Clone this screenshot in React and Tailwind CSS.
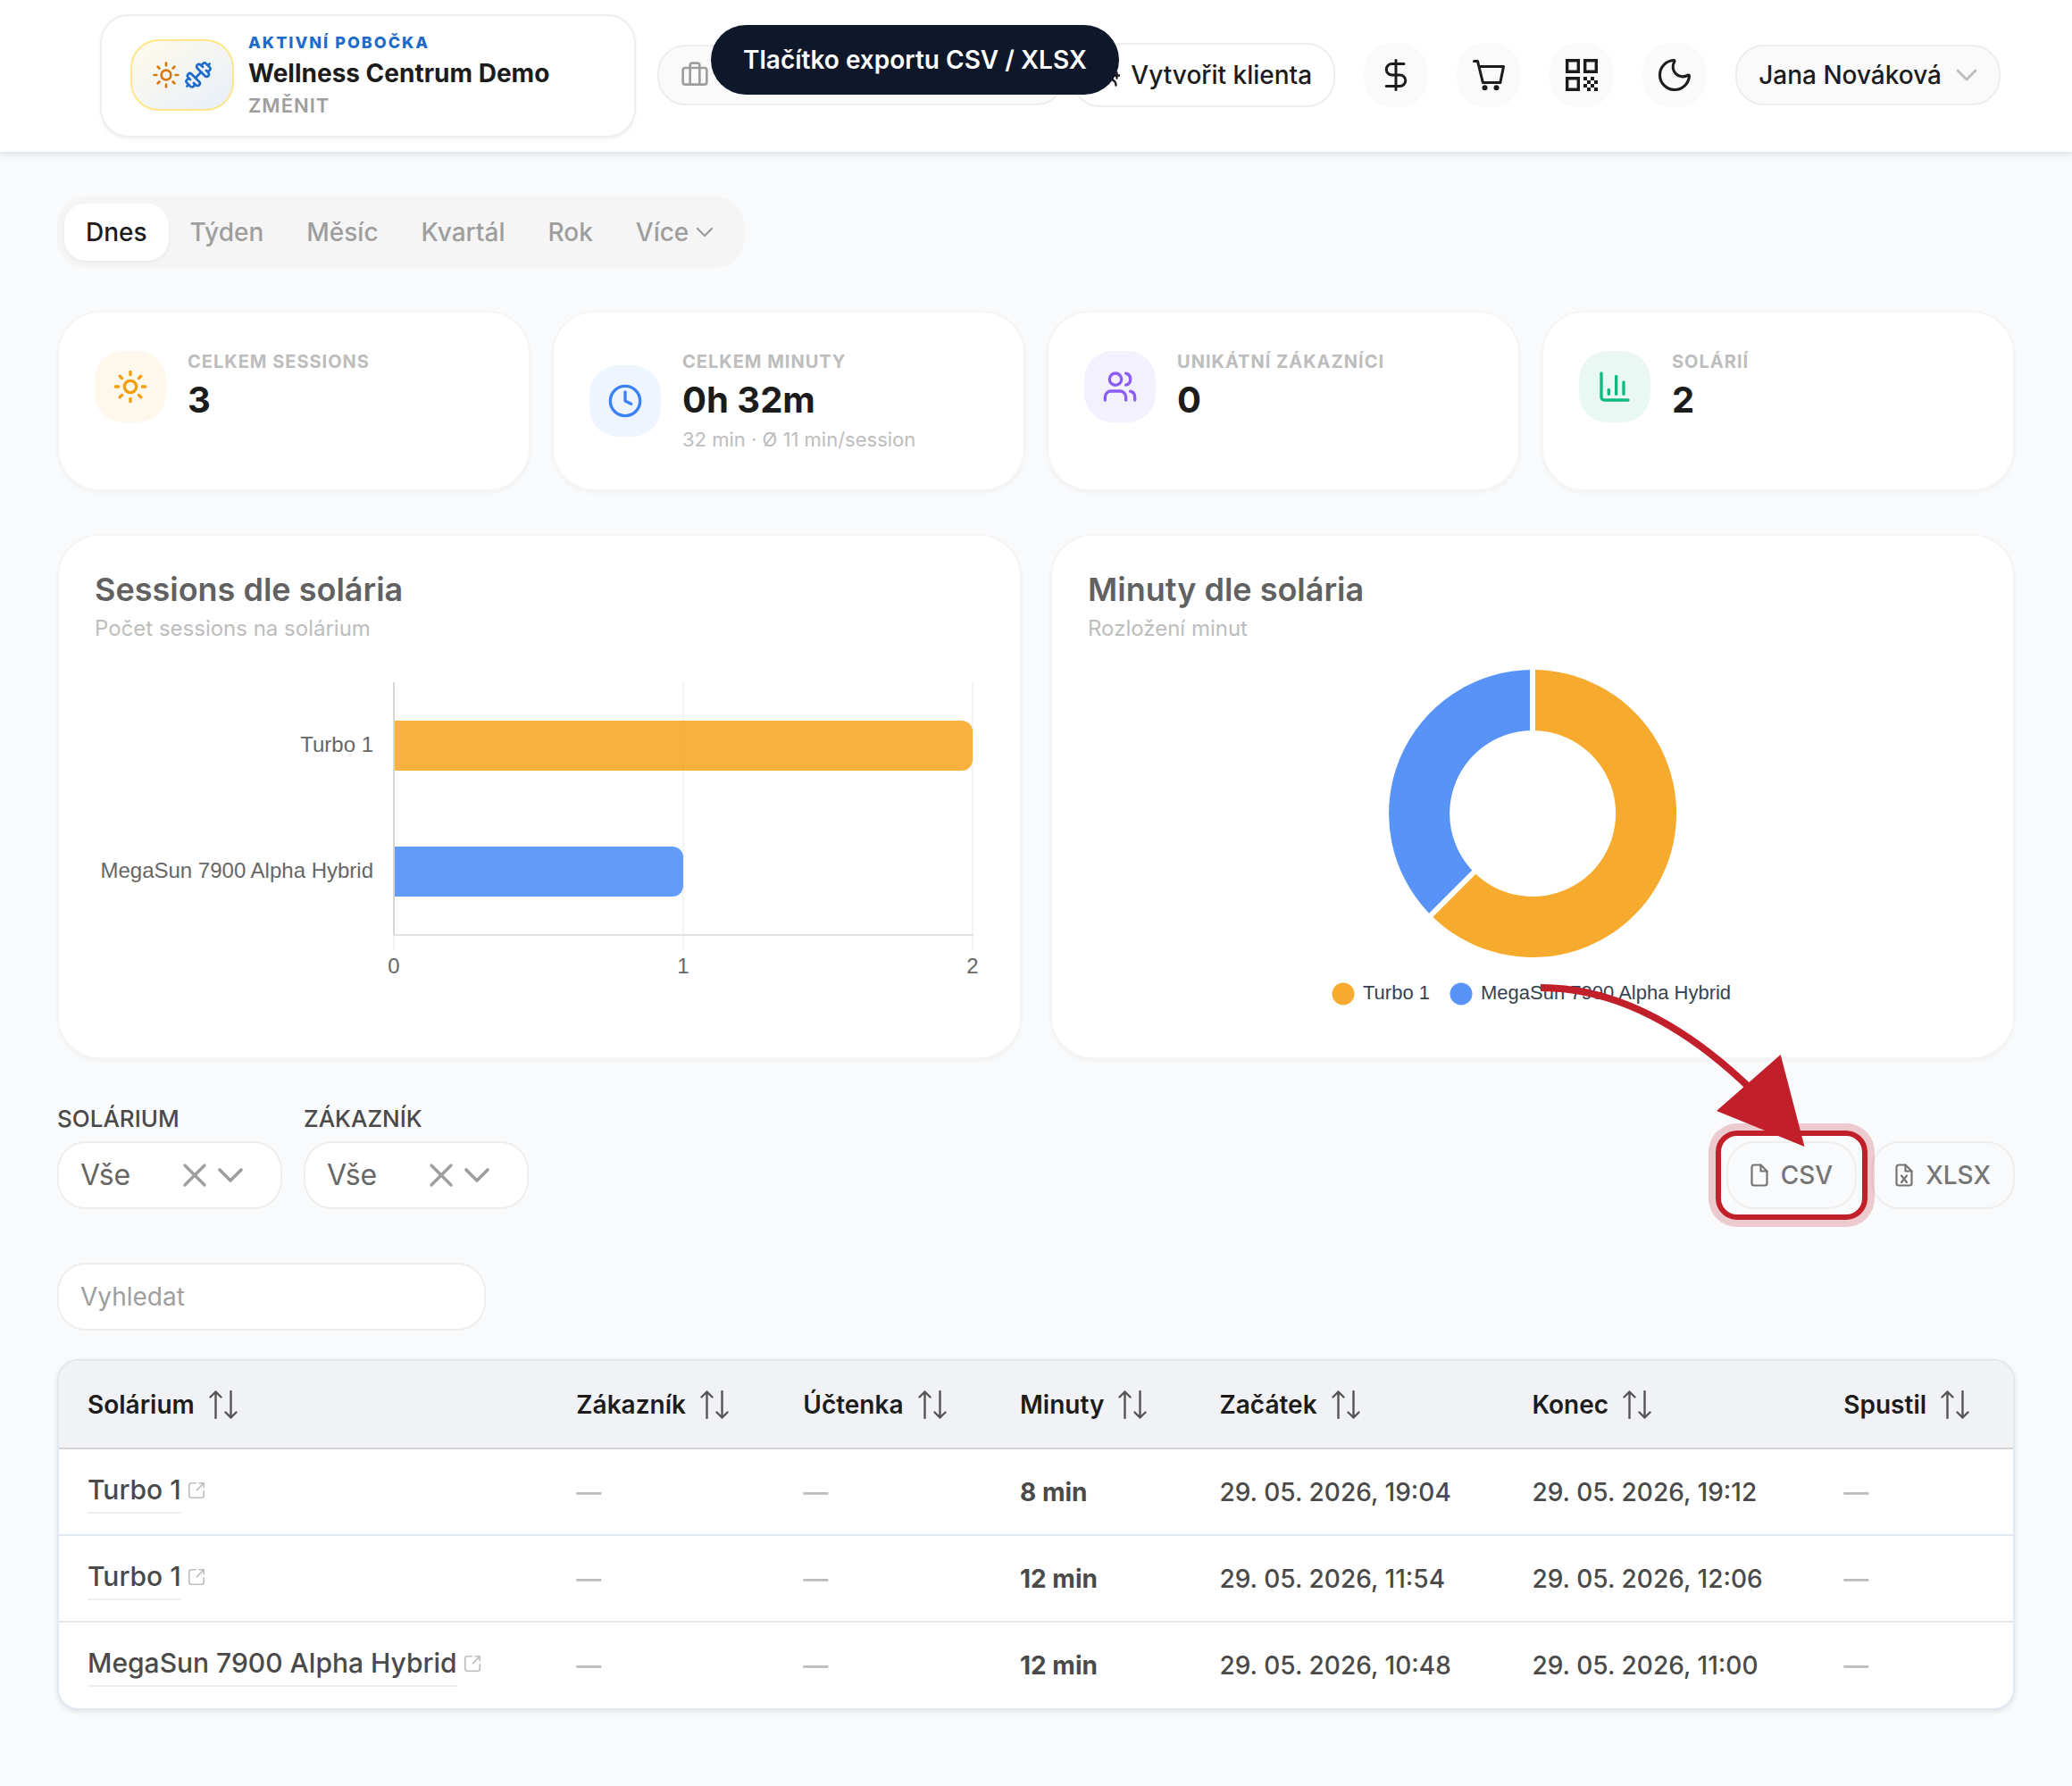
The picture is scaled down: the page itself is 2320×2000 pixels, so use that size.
import { useState } from "react"
import {
  Briefcase,
  ChartColumn,
  ChevronDown,
  Clock,
  Dumbbell,
  Moon,
  Sun,
  Users,
  X,
} from "lucide-react"

const periods = ["Dnes", "Týden", "Měsíc", "Kvartál", "Rok"]

const stats = [
  { label: "Celkem sessions", value: "3", icon: Sun, tone: "bg-[#fef7eb] text-[#f59e0b]" },
  {
    label: "Celkem minuty",
    value: "0h 32m",
    note: "32 min · Ø 11 min/session",
    icon: Clock,
    tone: "bg-[#eff5ff] text-[#3b82f6]",
  },
  { label: "Unikátní zákazníci", value: "0", icon: Users, tone: "bg-[#f4f1fe] text-[#8b5cf6]" },
  { label: "Solárií", value: "2", icon: ChartColumn, tone: "bg-[#e9f8f3] text-[#10b981]" },
]

const columns = ["Solárium", "Zákazník", "Účtenka", "Minuty", "Začátek", "Konec", "Spustil"]

const rows = [
  { solarium: "Turbo 1", minutes: "8 min", start: "29. 05. 2026, 19:04", end: "29. 05. 2026, 19:12" },
  { solarium: "Turbo 1", minutes: "12 min", start: "29. 05. 2026, 11:54", end: "29. 05. 2026, 12:06" },
  { solarium: "MegaSun 7900 Alpha Hybrid", minutes: "12 min", start: "29. 05. 2026, 10:48", end: "29. 05. 2026, 11:00" },
]

const DollarIcon = () => (
  <svg viewBox="0 0 36 36" className="size-9" fill="none" stroke="currentColor" strokeWidth="3" strokeLinecap="round" strokeLinejoin="round">
    <path d="M18 1.5v33" />
    <path d="M27 5.5H13.5a6.25 6.25 0 0 0 0 12.5h9a6.25 6.25 0 0 1 0 12.5H7.2" />
  </svg>
)

const CartIcon = () => (
  <svg viewBox="0 0 36 36" className="size-9" fill="none" stroke="currentColor" strokeWidth="3" strokeLinecap="round" strokeLinejoin="round">
    <path d="M1.5 2.6h4L11.4 26.6h19.4L34.5 8.6H7" />
    <circle cx="13.5" cy="32.2" r="3" fill="currentColor" stroke="none" />
    <circle cx="26.5" cy="32.2" r="3" fill="currentColor" stroke="none" />
  </svg>
)

const QrIcon = () => (
  <svg viewBox="0 0 36 36" className="size-9" fill="none" stroke="currentColor" strokeWidth="3.4">
    <path d="M1.7 1.7h12.6v12.6H1.7zM21.700 1.700h12.600v12.600H21.700zM1.700 21.700h12.600v12.600H1.700z" />
    <path
      d="M20 20h4v4h-4zM28 20h4v4h-4zM24 24h4v4h-4zM32 24h4v4h-4zM20 28h4v4h-4zM28 28h4v4h-4zM24 32h4v4h-4zM32 32h4v4h-4z"
      fill="currentColor"
      stroke="none"
    />
  </svg>
)

const UserPlusIcon = () => (
  <svg viewBox="0 0 28 28" className="size-7" fill="none" stroke="currentColor" strokeWidth="2.4" strokeLinecap="round">
    <circle cx="9" cy="8" r="5.5" />
    <path d="M1.5 25.5c0-5 3-8 7.500-8 4 0 8.500 0 11 2 2.500 1.500 3.500 3.500 3.500 6" />
    <path d="M24.500 11.500v6M21.500 14.500h6" />
  </svg>
)

const SortIcon = () => (
  <svg viewBox="0 0 32 32" className="size-8 text-[#555555]" fill="none" stroke="currentColor" strokeWidth="2.4" strokeLinecap="round" strokeLinejoin="round">
    <path d="M7.500 31V1.500M1.500 7.500l6-6 6 6" />
    <path d="M24.500 1v29.500M18.500 24.500l6 6 6-6" />
  </svg>
)

const FileIcon = ({ marked }) => (
  <svg viewBox="0 0 20 26" className="h-[26px] w-5" fill="none" stroke="currentColor" strokeWidth="2.200" strokeLinecap="round" strokeLinejoin="round">
    <path d="M11.500 1.500H4A2.500 2.500 0 0 0 1.500 4v18A2.500 2.500 0 0 0 4 24.500h12a2.500 2.500 0 0 0 2.500-2.500V8.500z" />
    <path d="M11.500 1.500v7h7" />
    {marked && <path d="M7 13.500l6 7.500M13 13.500L7 21" />}
  </svg>
)

const OpenIcon = () => (
  <svg viewBox="0 0 24 24" className="size-[22px] text-[#bdbdbd]" fill="none" stroke="currentColor" strokeWidth="1.8" strokeLinecap="round" strokeLinejoin="round">
    <path d="M11 3H6a3 3 0 0 0-3 3v12a3 3 0 0 0 3 3h12a3 3 0 0 0 3-3v-5" />
    <path d="M15.500 3H21v5.500M21 3l-8.500 8.500" />
  </svg>
)

const Header = () => (
  <header className="relative flex items-center border-b-2 border-[#e2e8f0] bg-white pt-4 pr-20 pb-[18px] pl-28 shadow-[0_2px_6px_rgba(0,0,0,0.08)]">
    <button
      type="button"
      className="-mb-0.5 flex h-[138px] w-[600px] items-center gap-4 rounded-[32px] border-2 border-[#eeeeee] bg-white px-8 pb-0.5 text-left shadow-[0_2px_4px_rgba(0,0,0,0.05)]"
    >
      <span className="flex h-20 w-[116px] items-center justify-center gap-1 rounded-[32px] border-2 border-[#fde68a] bg-linear-to-br from-[#fffbeb] to-[#e8effa]">
        <Sun size={32} className="text-[#d97706]" />
        <Dumbbell size={32} className="text-[#1f6bc9]" />
      </span>
      <span className="flex flex-col">
        <span className="text-lg leading-8 font-extrabold tracking-[2px] text-[#1f6bc9] uppercase">Aktivní pobočka</span>
        <span className="text-[28px] leading-9 font-bold">Wellness Centrum Demo</span>
        <span className="text-[22px] leading-9 font-semibold tracking-[1px] text-[#9e9e9e] uppercase">Změnit</span>
      </span>
    </button>

    <div className="ml-6 flex h-[68px] flex-1 items-center rounded-[32px] border-2 border-[#eeeeee] bg-[#fafafa] px-6 text-[#9e9e9e]">
      <Briefcase size={32} />
    </div>
    <button
      type="button"
      className="ml-2 flex h-[72px] items-center gap-3 rounded-[32px] border-2 border-[#eeeeee] bg-white px-6 text-[28px] font-medium"
    >
      <UserPlusIcon />
      Vytvořit klienta
    </button>

    <div className="ml-8 flex items-center gap-8">
      <button type="button" aria-label="Pokladna" className="flex size-[72px] items-center justify-center rounded-[32px] bg-[#fafafa]">
        <DollarIcon />
      </button>
      <button type="button" aria-label="Košík" className="flex size-[72px] items-center justify-center rounded-[32px] bg-[#fafafa]">
        <CartIcon />
      </button>
      <button type="button" aria-label="QR kód" className="flex size-[72px] items-center justify-center rounded-[32px] bg-[#fafafa]">
        <QrIcon />
      </button>
      <button type="button" aria-label="Tmavý režim" className="flex size-[72px] items-center justify-center rounded-[32px] bg-[#fafafa]">
        <Moon size={44} strokeWidth={1.7} />
      </button>
      <button
        type="button"
        className="flex h-[68px] items-center gap-2 rounded-[32px] border-2 border-[#eeeeee] bg-[#fafafa] pr-4 pl-6 text-[28px] font-medium"
      >
        Jana Nováková
        <ChevronDown size={40} strokeWidth={1.7} className="text-[#bdbdbd]" />
      </button>
    </div>

    {/* Tour tooltip */}
    <div
      role="tooltip"
      className="absolute top-7 left-[796px] rounded-full bg-[#0f172a] px-9 py-[18px] text-[28px] leading-[42px] font-semibold whitespace-nowrap text-white"
    >
      Tlačítko exportu CSV / XLSX
    </div>
  </header>
)

const StatCard = ({ label, value, note, icon: Icon, tone }) => (
  <div className="rounded-[48px] border-2 border-[#f5f5f5] bg-white p-10 shadow-[0_2px_4px_rgba(0,0,0,0.04)]">
    <div className="flex items-center gap-6">
      <div className={`flex size-20 shrink-0 items-center justify-center rounded-[32px] ${tone}`}>
        <Icon size={40} />
      </div>
      <div>
        <p className="text-xl leading-[30px] font-bold tracking-[1px] text-[#bdbdbd] uppercase">{label}</p>
        <p className="text-[40px] leading-[56px] font-bold">{value}</p>
        {note && <p className="text-[22px] leading-8 text-[#bdbdbd]">{note}</p>}
      </div>
    </div>
  </div>
)

const ChartCard = ({ title, subtitle, children }) => (
  <section className="rounded-[48px] border-2 border-[#f5f5f5] bg-white p-10 shadow-[0_2px_4px_rgba(0,0,0,0.04)]">
    <h2 className="text-4xl leading-10 font-semibold text-[#616161]">{title}</h2>
    <p className="mt-1 text-2xl leading-10 text-[#bdbdbd]">{subtitle}</p>
    <div className="mt-5">{children}</div>
  </section>
)

const SessionsChart = () => (
  <svg viewBox="0 0 996 400" className="w-full font-['Liberation_Sans',sans-serif] text-2xl" role="img" aria-label="Sessions dle solária">
    <g stroke="#f3f3f3" strokeWidth="2">
      <path d="M335 20v299M659 20v299M983 20v299" />
    </g>
    <path d="M335 20v284" stroke="#d6d6d6" strokeWidth="2" />
    <path d="M334 303h650" stroke="#e2e2e2" strokeWidth="2" />
    <path d="M336 63h635a12 12 0 0 1 12 12v32a12 12 0 0 1-12 12H336z" fill="#f59e0b" fillOpacity="0.8" />
    <path d="M336 204h311a12 12 0 0 1 12 12v32a12 12 0 0 1-12 12H336z" fill="#3b82f6" fillOpacity="0.8" />
    <g fill="#666666">
      <text x="312" y="98" textAnchor="end">Turbo 1</text>
      <text x="312" y="239" textAnchor="end">MegaSun 7900 Alpha Hybrid</text>
      <text x="335" y="346" textAnchor="middle">0</text>
      <text x="659" y="346" textAnchor="middle">1</text>
      <text x="983" y="346" textAnchor="middle">2</text>
    </g>
  </svg>
)

const MinutesChart = () => (
  <svg viewBox="0 0 996 400" className="w-full font-['Liberation_Sans',sans-serif] text-[22px]" role="img" aria-label="Minuty dle solária">
    {/* 20 of 32 minutes, so the split sits at 225 degrees */}
    <path d="M498 6a161 161 0 1 1-113.800 274.800l48.100-48.100A93 93 0 1 0 498 74z" fill="#f7ab2e" />
    <path d="M498 6a161 161 0 0 0-113.800 274.800l48.100-48.100A93 93 0 0 1 498 74z" fill="#5893f7" />
    <path d="M498 2v76M438 227l-58 58" stroke="#ffffff" strokeWidth="6" />
    <circle cx="286" cy="369" r="12.500" fill="#f7ab2e" />
    <circle cx="418" cy="369" r="12.500" fill="#5893f7" />
    <g fill="#374151">
      <text x="308" y="375">Turbo 1</text>
      <text x="440" y="375">MegaSun 7900 Alpha Hybrid</text>
    </g>
  </svg>
)

const FilterSelect = ({ id, label }) => (
  <div>
    <label htmlFor={id} className="block text-[26px] leading-[38px] font-medium text-[#4a4a4a] uppercase">
      {label}
    </label>
    <div className="mt-[6px] flex h-[76px] w-[252px] items-center rounded-[32px] border-2 border-[#eeeeee] bg-white pr-8 pl-6 text-[#9e9e9e]">
      <select id={id} className="min-w-0 flex-1 appearance-none bg-transparent text-[32px] text-[#666666] outline-none">
        <option>Vše</option>
      </select>
      <button type="button" aria-label={`Zrušit filtr ${label}`}>
        <X size={44} strokeWidth={1.8} />
      </button>
      <ChevronDown size={48} strokeWidth={1.8} className="-ml-1.5 shrink-0" />
    </div>
  </div>
)

const ExportButton = ({ children, marked }) => (
  <button
    type="button"
    className="flex h-[76px] items-center gap-[14px] rounded-[32px] border-2 border-[#eeeeee] px-[25px] text-[28px] font-medium text-[#757575]"
  >
    <FileIcon marked={marked} />
    {children}
  </button>
)

const ExportHint = () => (
  <>
    <div className="pointer-events-none absolute -inset-3 rounded-3xl border-6 border-[#c11f2a] shadow-[0_0_0_8px_rgba(193,31,42,0.22)]" />
    <svg viewBox="0 0 300 190" className="pointer-events-none absolute right-14 bottom-[66px] h-[190px] w-[300px]" fill="none">
      <path d="M2 8Q120 8 238 122" stroke="#c11f2a" strokeWidth="8" />
      <path d="M297.500 186L270.700 83 199 146z" fill="#c11f2a" />
    </svg>
  </>
)

const Dash = () => <span className="text-[#bdbdbd]">—</span>

const SessionsTable = () => (
  <div className="overflow-hidden rounded-3xl border-2 border-[#e2e8f0] bg-white shadow-[0_2px_6px_rgba(0,0,0,0.1)]">
    <table className="w-full text-left text-[28px] font-medium whitespace-nowrap text-[#4a4a4a]">
      <thead>
        <tr className="h-[98px] border-b-2 border-[#d4d4d4] bg-[#f1f2f6] text-[#1c1c1c]">
          {columns.map((column) => (
            <th key={column} scope="col" className="px-8 font-semibold">
              <button type="button" className="flex items-center gap-4">
                {column}
                <SortIcon />
              </button>
            </th>
          ))}
        </tr>
      </thead>
      <tbody>
        {rows.map((row) => (
          <tr key={row.start} className="h-[97px] border-[#e2e8f0] not-last:border-b-2">
            <td className="px-8 pb-1">
              <a href="#" className="flex items-center gap-1.5">
                <span className="border-b-2 border-[#eeeeee] text-[30px] leading-[50px]">{row.solarium}</span>
                <OpenIcon />
              </a>
            </td>
            <td className="px-8"><Dash /></td>
            <td className="px-8"><Dash /></td>
            <td className="px-8 font-bold">{row.minutes}</td>
            <td className="px-8">{row.start}</td>
            <td className="px-8">{row.end}</td>
            <td className="px-8"><Dash /></td>
          </tr>
        ))}
      </tbody>
    </table>
  </div>
)

const App = () => {
  const [period, setPeriod] = useState("Dnes")
  const [search, setSearch] = useState("")

  return (
    <div className="min-h-screen bg-[#f9fafc] font-['Inter',sans-serif] text-[#1c1c1c]">
      <Header />
      <main className="px-16 py-12">
        <div className="flex h-20 w-fit items-center rounded-[32px] bg-[#f5f5f5] px-2 text-[28px] font-medium text-[#9e9e9e]">
          {periods.map((item) => (
            <button
              key={item}
              type="button"
              onClick={() => setPeriod(item)}
              className={`h-16 rounded-3xl px-6 ${period === item ? "bg-white text-[#1c1c1c] shadow-[0_2px_4px_rgba(0,0,0,0.05)]" : ""}`}
            >
              {item}
            </button>
          ))}
          <button type="button" className="flex h-16 items-center gap-0.5 pr-5 pl-6">
            Více
            <ChevronDown size={32} strokeWidth={1.8} />
          </button>
        </div>

        <div className="mt-12 grid grid-cols-4 gap-6">
          {stats.map((stat) => (
            <StatCard key={stat.label} {...stat} />
          ))}
        </div>

        <div className="mt-12 grid grid-cols-2 gap-8">
          <ChartCard title="Sessions dle solária" subtitle="Počet sessions na solárium">
            <SessionsChart />
          </ChartCard>
          <ChartCard title="Minuty dle solária" subtitle="Rozložení minut">
            <MinutesChart />
          </ChartCard>
        </div>

        <div className="mt-12 flex items-end justify-between">
          <div className="flex gap-6">
            <FilterSelect id="solarium" label="Solárium" />
            <FilterSelect id="customer" label="Zákazník" />
          </div>
          <div className="flex gap-4">
            <div className="relative z-10">
              <ExportButton>CSV</ExportButton>
              <ExportHint />
            </div>
            <ExportButton marked>XLSX</ExportButton>
          </div>
        </div>

        <input
          type="search"
          aria-label="Vyhledat"
          placeholder="Vyhledat"
          value={search}
          onChange={(e) => setSearch(e.target.value)}
          className="mt-15 mb-8 block h-[76px] w-[480px] rounded-[32px] border-2 border-[#eeeeee] bg-white px-6 text-[28px] outline-none placeholder:text-[#9e9e9e]"
        />

        <SessionsTable />
      </main>
    </div>
  )
}

export default App
